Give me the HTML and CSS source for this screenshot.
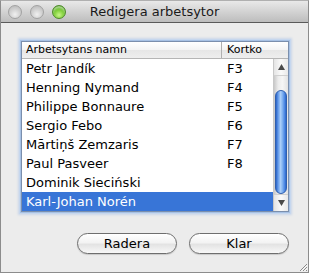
FILE: index.html
```html
<!DOCTYPE html>
<html lang="sv">
<head>
<meta charset="utf-8">
<title>Redigera arbetsytor</title>
<link rel="stylesheet" href="styles.css">
</head>
<body>
<div class="window">
  <div class="titlebar">
    <div class="lights">
      <span class="light gray"></span>
      <span class="light gray"></span>
      <span class="light green"></span>
    </div>
    <div class="title">Redigera arbetsytor</div>
  </div>
  <div class="content">
    <div class="listbox">
      <div class="header">
        <div class="hcol name">Arbetsytans namn</div>
        <div class="hcol key">Kortko</div>
      </div>
      <div class="body">
        <div class="rows">
          <div class="row"><span class="c-name">Petr Jandík</span><span class="c-key">F3</span></div>
          <div class="row"><span class="c-name">Henning Nymand</span><span class="c-key">F4</span></div>
          <div class="row"><span class="c-name">Philippe Bonnaure</span><span class="c-key">F5</span></div>
          <div class="row"><span class="c-name">Sergio Febo</span><span class="c-key">F6</span></div>
          <div class="row"><span class="c-name">Mārtiņš Zemzaris</span><span class="c-key">F7</span></div>
          <div class="row"><span class="c-name">Paul Pasveer</span><span class="c-key">F8</span></div>
          <div class="row"><span class="c-name">Dominik Sieciński</span><span class="c-key"></span></div>
          <div class="row selected"><span class="c-name">Karl-Johan Norén</span><span class="c-key"></span></div>
        </div>
        <div class="scrollbar">
          <div class="arrow up"><svg width="7" height="6" viewBox="0 0 7 6"><path d="M3.5 0 L7 6 L0 6 Z" fill="#4a4a4a"/></svg></div>
          <div class="track">
            <div class="thumb"></div>
          </div>
          <div class="arrow down"><svg width="7" height="6" viewBox="0 0 7 6"><path d="M0 0 L7 0 L3.5 6 Z" fill="#4a4a4a"/></svg></div>
        </div>
      </div>
    </div>
    <div class="buttons">
      <button class="btn">Radera</button>
      <button class="btn">Klar</button>
    </div>
    <div class="grip">
      <svg width="11" height="11" viewBox="0 0 11 11">
        <path d="M10 3 L3 10 M10 6 L6 10 M10 9 L9 10" stroke="#8a8a8a" stroke-width="1"/>
        <path d="M10.5 4 L4 10.5 M10.5 7 L7 10.5" stroke="#ffffff" stroke-width="0.8"/>
      </svg>
    </div>
  </div>
</div>
</body>
</html>
```

FILE: styles.css
```css
* { box-sizing: border-box; }
html, body {
  margin: 0;
  padding: 0;
  background: #ffffff;
}
body {
  font-family: "DejaVu Sans", "Liberation Sans", sans-serif;
  color: #000;
}
.window {
  width: 309px;
  height: 273px;
  border: 1px solid #8c8c8c;
  border-top-color: #b0b0b0;
  background: #ececec;
  display: flex;
  flex-direction: column;
  position: relative;
  overflow: hidden;
}
.titlebar {
  height: 22px;
  flex: none;
  background: linear-gradient(#e9e9e9, #d3d3d3 50%, #bdbdbd);
  border-bottom: 1px solid #5a5a5a;
  display: flex;
  align-items: center;
  position: relative;
}
.lights {
  display: flex;
  gap: 8px;
  padding-left: 7px;
  padding-top: 1px;
}
.light {
  width: 14px;
  height: 14px;
  border-radius: 50%;
  display: block;
}
.light.gray {
  background: radial-gradient(circle at 50% 70%, #f0f0f0 0%, #d4d4d4 45%, #b4b4b4 100%);
  border: 1px solid #a2a2a2;
}
.light.green {
  background: radial-gradient(circle at 50% 75%, #c9f58a 0%, #7fcf3a 45%, #3f8f16 100%);
  border: 1px solid #4d8a2a;
  box-shadow: inset 0 2px 2px rgba(255,255,255,0.5);
}
.title {
  position: absolute;
  left: 0;
  right: 0;
  top: 0;
  height: 22px;
  line-height: 22px;
  text-align: center;
  font-size: 13px;
  color: #1a1a1a;
  padding-left: 0;
  pointer-events: none;
}
.content {
  flex: 1;
  padding: 18px 19px 0 20px;
  display: flex;
  flex-direction: column;
  position: relative;
}
.listbox {
  width: 268px;
  border: 1px solid #7b8fad;
  box-shadow: 0 0 0 1px #a7c1e4, 0 0 0 2px #c6d7ee, 0 0 2px 3px rgba(140,175,225,0.35);
  background: #fff;
}
.header {
  height: 17px;
  display: flex;
  background: linear-gradient(#ffffff, #f3f3f3 50%, #e6e6e6 51%, #eeeeee);
  border-bottom: 1px solid #b5b5b5;
  font-size: 11px;
  line-height: 16px;
}
.hcol { padding-left: 4px; }
.hcol.name {
  width: 200px;
  border-right: 1px solid #b0b0b0;
}
.hcol.key { flex: 1; padding-left: 5px; }
.body {
  display: flex;
  height: 152px;
}
.rows {
  width: 251px;
}
.row {
  height: 19px;
  display: flex;
  align-items: center;
  font-size: 13px;
}
.c-name {
  width: 200px;
  padding-left: 4px;
  white-space: nowrap;
}
.c-key {
  padding-left: 5px;
}
.row.selected {
  background: #3875d7;
  color: #fff;
}
.scrollbar {
  width: 15px;
  display: flex;
  flex-direction: column;
  background: linear-gradient(90deg, #c9c9c9, #ececec 30%, #f6f6f6 60%, #e2e2e2);
  border-left: 1px solid #c8c8c8;
}
.arrow {
  height: 17px;
  display: flex;
  align-items: center;
  justify-content: center;
  background: linear-gradient(90deg, #e4e4e4, #fafafa 50%, #e8e8e8);
  flex: none;
}
.arrow.up { border-bottom: 1px solid #d0d0d0; }
.arrow.down { border-top: 1px solid #d0d0d0; }
.track {
  flex: 1;
  padding: 14px 1px 0 1px;
  display: flex;
  flex-direction: column;
}
.thumb {
  flex: 1;
  border-radius: 7px;
  border: 1px solid #2f5fae;
  background: linear-gradient(90deg, #2a64c8 0%, #6ea3ee 25%, #a9cdf8 45%, #8cbaf3 60%, #4e89e4 85%, #2d66c9 100%);
}
.buttons {
  display: flex;
  justify-content: flex-end;
  gap: 12px;
  margin-top: 21px;
  padding-right: 0;
}
.btn {
  width: 100px;
  height: 21px;
  border-radius: 11px;
  border: 1px solid #6e6e6e;
  background: linear-gradient(#ffffff, #f3f3f3 45%, #e3e3e3 55%, #f8f8f8);
  font-family: "DejaVu Sans", "Liberation Sans", sans-serif;
  font-size: 13px;
  color: #000;
  padding: 0;
  line-height: 19px;
  box-shadow: 0 1px 1px rgba(0,0,0,0.15);
}
.grip {
  position: absolute;
  right: 0;
  bottom: 0;
  width: 11px;
  height: 11px;
}
.grip svg { display: block; }
```
